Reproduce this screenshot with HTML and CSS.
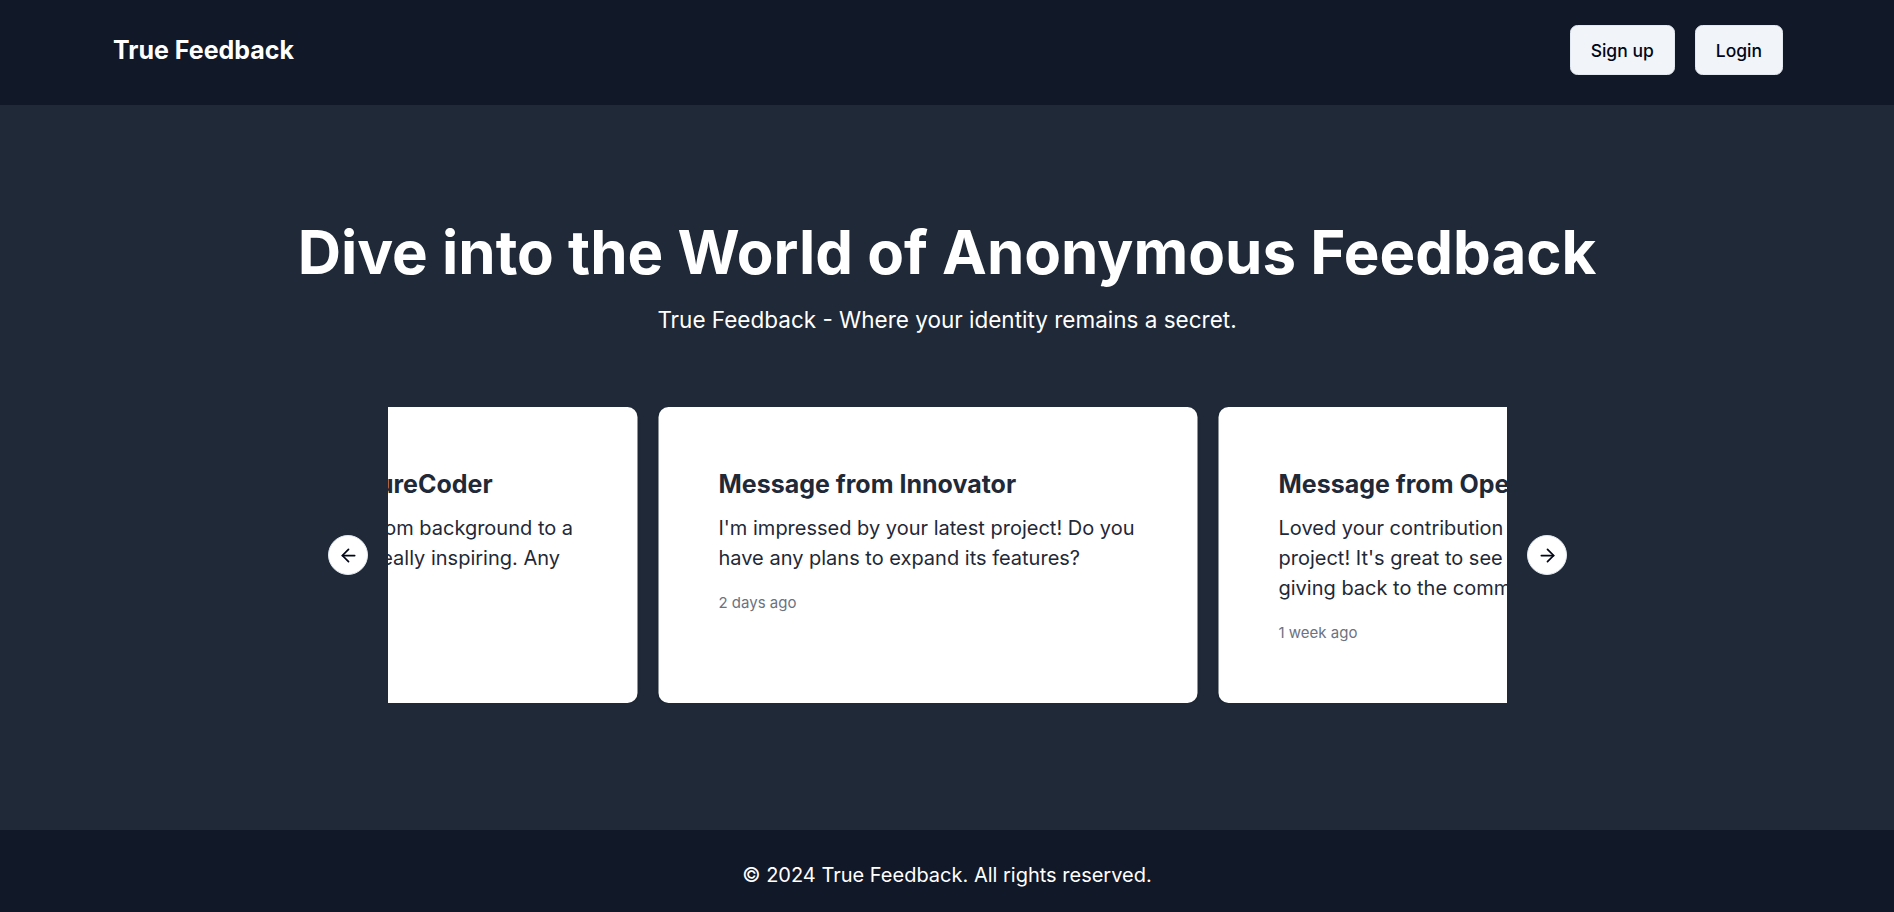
FILE: index.html
```html
<!DOCTYPE html>
<html lang="en">
<head>
<meta charset="utf-8">
<title>True Feedback</title>
<link rel="stylesheet" href="styles.css">
</head>
<body>
<header class="site-header">
  <a class="brand" href="#">True Feedback</a>
  <nav class="auth">
    <button class="btn">Sign up</button>
    <button class="btn">Login</button>
  </nav>
</header>
<main class="hero">
  <h1 class="hero-title">Dive into the World of Anonymous Feedback</h1>
  <p class="hero-sub">True Feedback - Where your identity remains a secret.</p>
  <section class="carousel">
    <button class="nav-btn nav-prev" aria-label="Previous slide">
      <svg viewBox="0 0 24 24" width="21" height="21" fill="none" stroke="currentColor" stroke-width="2" stroke-linecap="round" stroke-linejoin="round"><path d="m12 19-7-7 7-7"/><path d="M19 12H5"/></svg>
    </button>
    <div class="viewport">
      <div class="track">
        <article class="card">
          <h3 class="card-title">Message from FutureCoder</h3>
          <p class="card-text">Your amazing journey from background to a full-stack developer is really inspiring. Any tips to share?</p>
          <p class="card-time">3 days ago</p>
        </article>
        <article class="card">
          <h3 class="card-title">Message from Innovator</h3>
          <p class="card-text">I'm impressed by your latest project! Do you have any plans to expand its features?</p>
          <p class="card-time">2 days ago</p>
        </article>
        <article class="card">
          <h3 class="card-title">Message from OpenSourceFan</h3>
          <p class="card-text">Loved your contribution to the open-source project! It's great to see skilled developers giving back to the community.</p>
          <p class="card-time">1 week ago</p>
        </article>
      </div>
    </div>
    <button class="nav-btn nav-next" aria-label="Next slide">
      <svg viewBox="0 0 24 24" width="21" height="21" fill="none" stroke="currentColor" stroke-width="2" stroke-linecap="round" stroke-linejoin="round"><path d="M5 12h14"/><path d="m12 5 7 7-7 7"/></svg>
    </button>
  </section>
</main>
<footer class="site-footer">© 2024 True Feedback. All rights reserved.</footer>
</body>
</html>
```
FILE: styles.css
```css
* { box-sizing: border-box; }
html, body { margin: 0; padding: 0; }
body {
  font-family: Inter, "Noto Sans", "Liberation Sans", sans-serif;
  min-height: 100vh;
  display: flex;
  flex-direction: column;
  background: #1f2937;
}
.site-header {
  background: #111827;
  height: 105px;
  padding: 0 111px 5px 113px;
  display: flex;
  align-items: center;
  justify-content: space-between;
}
.brand {
  color: #fff;
  text-decoration: none;
  font-size: 25px;
  font-weight: 700;
  line-height: 35px;
}
.auth { display: flex; gap: 20px; }
.btn {
  height: 50px;
  padding: 0 20px;
  border: 1px solid #e2e8f0;
  border-radius: 7.5px;
  background: #f1f5f9;
  color: #020617;
  font-family: inherit;
  font-size: 17.5px;
  font-weight: 500;
  cursor: pointer;
}
.hero {
  flex: 1;
  background: #1f2937;
  color: #fff;
  text-align: center;
  padding: 117px 0 0;
}
.hero-title {
  margin: 0;
  font-size: 60px;
  line-height: 60px;
  font-weight: 700;
}
.hero-sub {
  margin: 20px 0 0;
  font-size: 22.5px;
  line-height: 35px;
}
.carousel {
  position: relative;
  width: 1119px;
  margin: 70px 0 0 388px;
}
.viewport { overflow: hidden; }
.track {
  display: flex;
  gap: 21px;
  transform: translateX(-289.5px);
}
.card {
  flex: 0 0 539px;
  background: #fff;
  border-radius: 10px;
  padding: 60px;
  text-align: left;
  color: #1f2937;
  min-height: 296px;
  box-shadow: 0 1px 3px rgba(0,0,0,0.1);
}
.card-title {
  margin: 0;
  font-size: 25px;
  line-height: 35px;
  font-weight: 700;
  white-space: nowrap;
}
.card-text {
  margin: 10.5px 0 0;
  font-size: 20px;
  line-height: 30px;
}
.card-time {
  margin: 20px 0 0;
  font-size: 15px;
  line-height: 20px;
  color: #6b7280;
}
.nav-btn {
  position: absolute;
  top: 50%;
  width: 40px;
  height: 40px;
  margin-top: -20px;
  border-radius: 50%;
  border: 1px solid #e2e8f0;
  background: #fff;
  color: #020617;
  display: flex;
  align-items: center;
  justify-content: center;
  padding: 0;
  cursor: pointer;
}
.nav-prev { left: -60px; }
.nav-next { right: -60px; }
.site-footer {
  background: #111827;
  color: #fff;
  text-align: center;
  font-size: 20px;
  line-height: 30px;
  padding: 30px 0 22px;
}
```
